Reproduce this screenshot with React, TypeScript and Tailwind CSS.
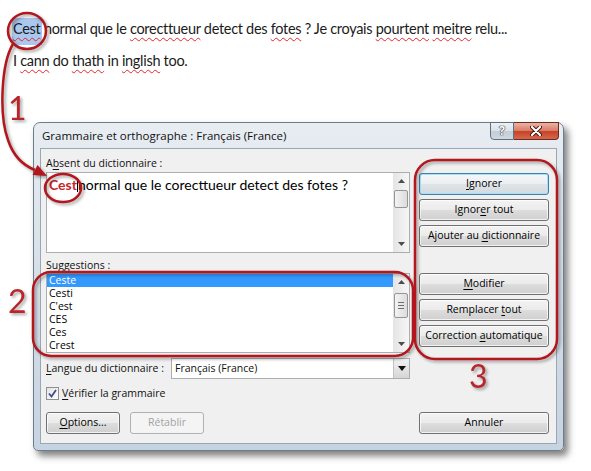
import React from "react";

type Kids = { children: React.ReactNode };

// mnemonic letter, underlined like in Windows dialogs
const Mn = ({ children }: Kids) => <span className="underline underline-offset-[2px]">{children}</span>;

// red wavy spell-check underline
const Sp = ({ children }: Kids) => (
  <span className="underline decoration-wavy decoration-[#e2262b] decoration-[1px] underline-offset-[3px]">{children}</span>
);

function Btn({ children, variant = "normal" }: Kids & { variant?: "normal" | "focus" | "disabled" }) {
  const styles = {
    normal:
      "border-[#707070] text-black bg-[linear-gradient(to_bottom,#f3f3f3_0%,#ebebeb_48%,#dddddd_52%,#cfcfcf_100%)] shadow-[inset_0_0_0_1px_rgba(255,255,255,0.75)]",
    focus:
      "border-[#3c7fb1] text-black bg-[linear-gradient(to_bottom,#f5f7f9_0%,#eceff2_48%,#dfe4e8_52%,#d4dade_100%)] shadow-[inset_0_0_0_1px_#a6e1f8]",
    disabled: "border-[#adb2b5] text-[#a3a3a3] bg-[#f4f4f4]",
  };
  return (
    <div className={`h-[22px] rounded-[3px] border flex items-center justify-center text-[10.5px] ${styles[variant]}`}>
      <span>{children}</span>
    </div>
  );
}

function Arrow({ down }: { down?: boolean }) {
  return (
    <svg width="7" height="4" viewBox="0 0 7 4">
      <path d={down ? "M0 0 L7 0 L3.5 4 Z" : "M0 4 L7 4 L3.5 0 Z"} fill="#4d4d4d" />
    </svg>
  );
}

function ScrollBar({ gap, thumb, grip }: { gap: string; thumb: string; grip?: boolean }) {
  return (
    <div className="w-[16px] h-full flex flex-col bg-[linear-gradient(to_right,#e4e4e4,#f6f6f6)]">
      <div className="h-[16px] flex items-center justify-center">
        <Arrow />
      </div>
      <div className={gap} />
      <div
        className={`${thumb} mx-[1px] rounded-[2px] border border-[#969696] bg-[linear-gradient(to_right,#f3f3f3,#dcdcdc)] flex flex-col items-center justify-center gap-[2px]`}
      >
        {grip && (
          <>
            <div className="w-[6px] h-px bg-[#6e6e6e]" />
            <div className="w-[6px] h-px bg-[#6e6e6e]" />
            <div className="w-[6px] h-px bg-[#6e6e6e]" />
          </>
        )}
      </div>
      <div className="flex-1" />
      <div className="h-[16px] flex items-center justify-center">
        <Arrow down />
      </div>
    </div>
  );
}

const suggestions = ["Ceste", "Cesti", "C'est", "CES", "Ces", "Crest"];

function Dialog() {
  return (
    <div className="ml-[33px] mt-[52px] w-[531px] h-[329px] rounded-t-[7px] rounded-b-[5px] border border-[#6d7d8e] bg-[linear-gradient(to_bottom,#e8edf2_0%,#d6dfe8_45%,#c6d3e0_100%)] shadow-[4px_5px_7px_rgba(0,0,0,0.5)] flex flex-col font-['Open_Sans',sans-serif] text-[#111]">
      {/* title bar */}
      <div className="h-[25px] flex">
        <div className="flex-1 pl-[8px] pt-[5px] text-[11.5px] leading-[15px]">Grammaire et orthographe : Français (France)</div>
        <div className="flex mr-[4px] -mt-px">
          <div className="w-[24px] h-[18px] rounded-bl-[4px] border border-[#5f6f80] bg-[linear-gradient(to_bottom,#edf1f5_0%,#d9e1e9_50%,#c2cdd8_51%,#cfd8e2_100%)] flex items-center justify-center text-[12px] font-bold leading-none text-white [text-shadow:0_0_1px_#2b2b2b,0_0_1px_#2b2b2b,0_0_1px_#2b2b2b]">
            ?
          </div>
          <div className="w-[45px] h-[18px] rounded-br-[4px] border border-l-0 border-[#6a2b21] bg-[linear-gradient(to_bottom,#eab2a5_0%,#d97c66_48%,#c6432a_52%,#d5674a_100%)] flex items-center justify-center">
            <svg width="12" height="10" viewBox="0 0 12 10">
              <path d="M2 1 L10 9 M10 1 L2 9" stroke="#3a1510" strokeWidth="4" strokeLinecap="round" />
              <path d="M2 1 L10 9 M10 1 L2 9" stroke="#ffffff" strokeWidth="2.2" strokeLinecap="round" />
            </svg>
          </div>
        </div>
      </div>

      {/* client area */}
      <div className="mx-[6px] h-[296px] border border-[#9aa6b3] bg-[#f0f0f0] flex gap-[9px] pl-[5px] pr-[7px] text-[10.5px]">
        {/* left column */}
        <div className="w-[364px] flex flex-col">
          <div className="mt-[6px] h-[16px] leading-[16px]">
            A<Mn>b</Mn>sent du dictionnaire :
          </div>
          <div className="mt-px h-[81px] border border-[#abadb3] bg-white flex">
            <div className="flex-1 pl-[2px] pt-[3px] font-['Lato',sans-serif] text-[14px] leading-[18px] text-black">
              <span className="font-bold text-[#c8262b]">Cest</span>
              <span className="inline-block w-px h-[14px] bg-black align-[-2px]" />
              normal que le corecttueur detect des fotes ?
            </div>
            <ScrollBar gap="h-px" thumb="h-[18px]" />
          </div>

          <div className="mt-[4px] h-[16px] leading-[16px]">
            Suggestio<Mn>n</Mn>s :
          </div>
          <div className="h-[80px] border border-[#abadb3] bg-white flex">
            <div className="flex-1 flex flex-col">
              {suggestions.map((s, i) => (
                <div
                  key={s}
                  className={`h-[13px] leading-[13px] pl-[2px] ${i === 0 ? "bg-[#3399ff] text-white" : "text-black"}`}
                >
                  {s}
                </div>
              ))}
            </div>
            <ScrollBar gap="h-[3px]" thumb="h-[25px]" grip />
          </div>

          <div className="mt-[5px] h-[21px] flex items-center">
            <div className="w-[125px]">
              <Mn>L</Mn>angue du dictionnaire :
            </div>
            <div className="flex-1 h-full border border-[#abadb3] bg-white flex items-center">
              <div className="flex-1 pl-[3px]">Français (France)</div>
              <div className="w-[16px] h-full border-l border-[#c3c3c3] bg-[linear-gradient(to_bottom,#f2f2f2,#d6d6d6)] flex items-center justify-center">
                <svg width="8" height="5" viewBox="0 0 8 5">
                  <path d="M0 0 L8 0 L4 5 Z" fill="#111" />
                </svg>
              </div>
            </div>
          </div>

          <div className="mt-[8px] h-[13px] flex items-center gap-[3px]">
            <div className="w-[13px] h-[13px] border border-[#8e8f8f] bg-[linear-gradient(to_bottom_right,#e3e3e3,#ffffff)] flex items-center justify-center">
              <svg width="9" height="9" viewBox="0 0 9 9">
                <path d="M1 4.5 L3.5 7.5 L8 1" stroke="#3e4f8c" strokeWidth="1.8" fill="none" />
              </svg>
            </div>
            <div>
              <Mn>V</Mn>érifier la grammaire
            </div>
          </div>

          <div className="mt-[12px] flex gap-[10px]">
            <div className="w-[74px]">
              <Btn>
                <Mn>O</Mn>ptions...
              </Btn>
            </div>
            <div className="w-[74px]">
              <Btn variant="disabled">Rétablir</Btn>
            </div>
          </div>
        </div>

        {/* right column */}
        <div className="w-[130px] flex flex-col">
          <div className="mt-[24px] flex flex-col gap-[4px]">
            <Btn variant="focus">
              <Mn>I</Mn>gnorer
            </Btn>
            <Btn>
              Ignor<Mn>e</Mn>r tout
            </Btn>
            <Btn>
              Ajouter au <Mn>d</Mn>ictionnaire
            </Btn>
          </div>
          <div className="mt-[26px] flex flex-col gap-[4px]">
            <Btn>
              <Mn>M</Mn>odifier
            </Btn>
            <Btn>
              Remplacer <Mn>t</Mn>out
            </Btn>
            <Btn>
              Correction <Mn>a</Mn>utomatique
            </Btn>
          </div>
          <div className="mt-[65px]">
            <Btn>Annuler</Btn>
          </div>
        </div>
      </div>
    </div>
  );
}

export default function App() {
  return (
    <div className="relative isolate w-[591px] h-[471px] bg-white overflow-hidden">
      {/* document text */}
      <div className="pt-[20px] pl-[13px] font-['Lato',sans-serif] text-[14.5px] tracking-[-0.3px] leading-[18px] text-[#1b1b1b]">
        <div>
          <span className="relative">
            <span className="absolute -left-px -top-[2px] w-[30px] h-[27px] bg-[#aac7ee] -z-10" />
            <Sp>Cest</Sp>
          </span>{" "}
          normal que le <Sp>corecttueur</Sp> detect des <Sp>fotes</Sp> ? Je croyais <Sp>pourtent</Sp>{" "}
          <Sp>meitre</Sp> relu...
        </div>
        <div className="mt-[14px]">
          I <Sp>cann</Sp> do <Sp>thath</Sp> in <Sp>inglish</Sp> too.
        </div>
      </div>

      <Dialog />

      {/* red annotations */}
      <svg
        className="absolute inset-0 pointer-events-none drop-shadow-[2px_2px_1.5px_rgba(0,0,0,0.35)]"
        width="591"
        height="471"
        viewBox="0 0 591 471"
      >
        <g stroke="#b3161c" strokeWidth="2.5" fill="none">
          <ellipse cx="27" cy="31" rx="19" ry="18" />
          <path d="M13 44 C1 64 -1 115 8 140 C13 155 22 165 35 170" />
          <ellipse cx="63" cy="188" rx="18" ry="14" />
          <rect x="33" y="272" width="380" height="84" rx="18" />
          <rect x="415" y="160" width="142" height="199" rx="20" />
        </g>
        <path d="M47 176 L32.5 174.9 L37.5 165.1 Z" fill="#b3161c" />
        <g fill="#b8252a" fontFamily="Lato, sans-serif" fontSize="32">
          <text x="8" y="120">1</text>
          <text x="8" y="313">2</text>
          <text x="469" y="388">3</text>
        </g>
      </svg>
    </div>
  );
}
